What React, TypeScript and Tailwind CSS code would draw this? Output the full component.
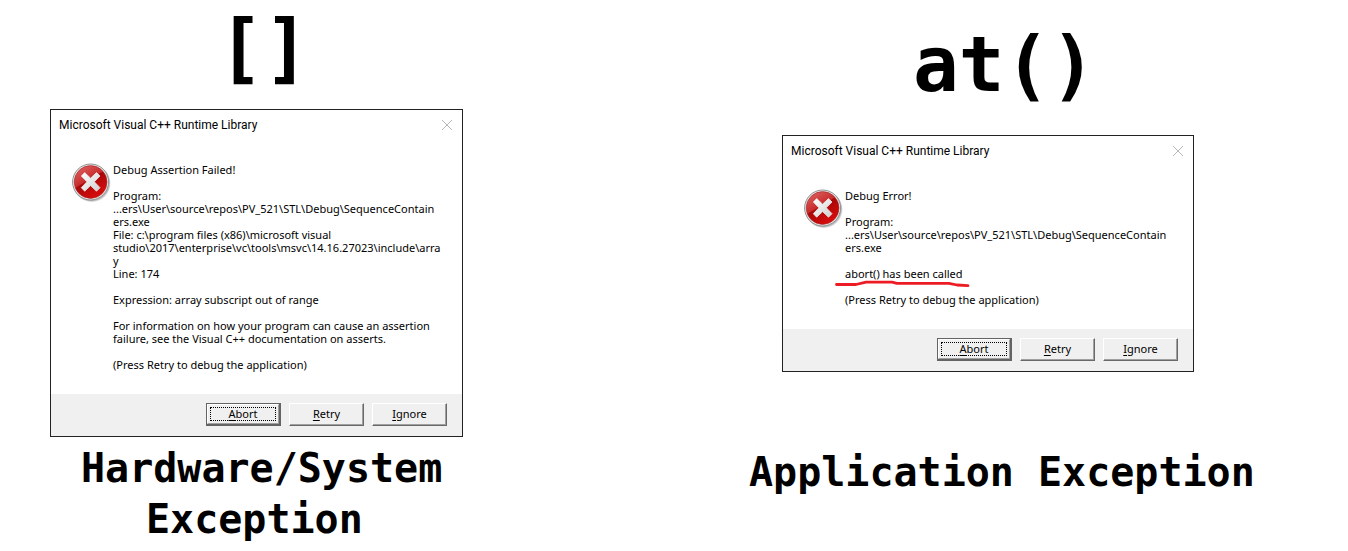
import type { ReactNode } from "react";

function ErrorIcon({ id }: { id: string }) {
  return (
    <svg viewBox="0 0 40 40" className="size-10 shrink-0" aria-hidden="true">
      <defs>
        <linearGradient id={`${id}-disc`} x1="0" y1="0" x2="0.6" y2="1">
          <stop offset="0" stopColor="#df6a6a" />
          <stop offset="0.5" stopColor="#c92c2c" />
          <stop offset="0.53" stopColor="#a80808" />
          <stop offset="1" stopColor="#d90c0c" />
        </linearGradient>
        <linearGradient id={`${id}-cross`} x1="0" y1="0" x2="1" y2="1">
          <stop offset="0" stopColor="#ffffff" />
          <stop offset="1" stopColor="#cfcfcf" />
        </linearGradient>
      </defs>
      <circle cx="19.8" cy="20.4" r="18.6" fill="#000" opacity="0.14" />
      <circle cx="19.4" cy="19.8" r="18.4" fill="#000" opacity="0.16" />
      <circle cx="18.6" cy="19" r="18" fill="#e8e8e8" stroke="#929292" strokeWidth="1" />
      <circle cx="18.6" cy="19" r="16.4" fill={`url(#${id}-disc)`} stroke="#a22525" strokeWidth="0.6" />
      <path
        d="M9.3 13 L12.7 9.6 L18.6 15.2 L24.5 9.6 L28 13 L22.3 18.8 L28 24.7 L24.5 28.2 L18.6 22.6 L12.7 28.2 L9.3 24.7 L14.9 18.8 Z"
        fill={`url(#${id}-cross)`}
        stroke="#e9e9e9"
        strokeWidth="0.8"
        strokeLinejoin="round"
      />
    </svg>
  );
}

function DialogButton({ label, focused = false }: { label: string; focused?: boolean }) {
  const text = (
    <>
      <span className="underline underline-offset-2">{label[0]}</span>
      {label.slice(1)}
    </>
  );
  if (focused) {
    return (
      <button
        type="button"
        className="h-[23px] w-[75px] border border-r-2 border-b-2 border-[#646464] bg-[#f0f0f0]"
      >
        <span className="flex h-full items-center justify-center border border-t-white border-l-white border-r-[#a0a0a0] border-b-[#a0a0a0] p-[2px]">
          <span className="flex h-full w-full items-center justify-center border border-dotted border-black">
            <span className="pb-[2px]">{text}</span>
          </span>
        </span>
      </button>
    );
  }
  return (
    <button
      type="button"
      className="h-[23px] w-[75px] border border-t-white border-l-white border-r-[#696969] border-b-[#696969] bg-[#f0f0f0] pb-[2px] shadow-[inset_-1px_-1px_0_#a0a0a0]"
    >
      {text}
    </button>
  );
}

function RuntimeDialog({ id, children }: { id: string; children: ReactNode }) {
  return (
    <div
      role="dialog"
      aria-labelledby={`${id}-title`}
      className="border border-[#222] bg-white font-['Noto_Sans','Open_Sans',sans-serif] text-[11px] leading-[13px] font-normal text-black"
    >
      <div className="flex h-[30px] items-center justify-between pr-[9px] pl-2">
        <h2 id={`${id}-title`} className="font-['Roboto',sans-serif] text-[12px] leading-4">
          Microsoft Visual C++ Runtime Library
        </h2>
        <button type="button" aria-label="Close" className="text-[#b8b8b8]">
          <svg viewBox="0 0 12 12" className="size-3" fill="none" stroke="currentColor">
            <path d="M1 1 L11 11 M11 1 L1 11" />
          </svg>
        </button>
      </div>
      <div className="flex gap-px py-[23px] pl-[21px]">
        <ErrorIcon id={id} />
        <div className="flex flex-col gap-[13px] whitespace-nowrap">{children}</div>
      </div>
      <div className="flex justify-end gap-2 bg-[#f0f0f0] pt-[9px] pr-[15px] pb-[10px]">
        <DialogButton label="Abort" focused />
        <DialogButton label="Retry" />
        <DialogButton label="Ignore" />
      </div>
    </div>
  );
}

export default function App() {
  return (
    <main className="grid grid-cols-2 bg-white font-['DejaVu_Sans_Mono',monospace] font-bold text-black">
      <section className="pl-[50px]">
        <h1 className="pb-[14px] pl-[168px] text-[76px] leading-[95px]">[]</h1>
        <div className="w-[413px]">
          <RuntimeDialog id="assertion">
            <p>Debug Assertion Failed!</p>
            <p>
              Program:
              <br />
              ...ers\User\source\repos\PV_521\STL\Debug\SequenceContain
              <br />
              ers.exe
              <br />
              File: c:\program files (x86)\microsoft visual
              <br />
              studio\2017\enterprise\vc\tools\msvc\14.16.27023\include\arra
              <br />y<br />
              Line: 174
            </p>
            <p>Expression: array subscript out of range</p>
            <p>
              For information on how your program can cause an assertion
              <br />
              failure, see the Visual C++ documentation on asserts.
            </p>
            <p>(Press Retry to debug the application)</p>
          </RuntimeDialog>
        </div>
        <p className="pt-[6px] pl-[31px] text-[40px] leading-[51px]">
          Hardware/System
          <span className="block pl-[65px]">Exception</span>
        </p>
      </section>
      <section className="pl-[75px]">
        <h1 className="pt-[17px] pb-[23px] pl-[164px] text-[76px] leading-[95px]">at()</h1>
        <div className="ml-[33px] w-[412px]">
          <RuntimeDialog id="abort">
            <p>Debug Error!</p>
            <p>
              Program:
              <br />
              ...ers\User\source\repos\PV_521\STL\Debug\SequenceContain
              <br />
              ers.exe
            </p>
            <p className="relative">
              abort() has been called
              <svg
                viewBox="0 0 136 8"
                className="absolute top-[13px] -left-[10px] h-2 w-[136px]"
                fill="none"
                stroke="#ed1c24"
                strokeWidth="2.8"
                strokeLinecap="round"
                strokeLinejoin="round"
                aria-hidden="true"
              >
                <path d="M1.5 4.5 L21 4.5 L31 2.2 L57 2.2 L62 3.4 L114 3.4 L122 5 L133 5.6" />
              </svg>
            </p>
            <p>(Press Retry to debug the application)</p>
          </RuntimeDialog>
        </div>
        <p className="pt-[75px] text-[40px] leading-[51px] whitespace-nowrap">Application Exception</p>
      </section>
    </main>
  );
}
